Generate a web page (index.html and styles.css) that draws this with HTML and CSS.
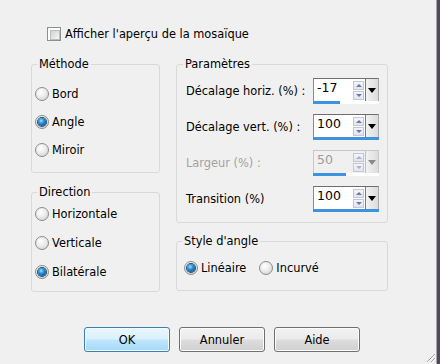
FILE: index.html
```html
<!DOCTYPE html>
<html lang="fr">
<head>
<meta charset="utf-8">
<title>Mosaïque</title>
<link rel="stylesheet" href="styles.css">
</head>
<body>
<div class="window">
  <label class="check-row"><span class="checkbox"></span><span>Afficher l'aperçu de la mosaïque</span></label>

  <div class="columns">
    <div class="col col-left">
      <fieldset class="group g-methode">
        <legend>Méthode</legend>
        <div class="radio-list">
          <label class="radio-row"><span class="radio"></span>Bord</label>
          <label class="radio-row"><span class="radio checked"></span>Angle</label>
          <label class="radio-row"><span class="radio"></span>Miroir</label>
        </div>
      </fieldset>
      <fieldset class="group g-direction">
        <legend>Direction</legend>
        <div class="radio-list">
          <label class="radio-row"><span class="radio"></span>Horizontale</label>
          <label class="radio-row"><span class="radio"></span>Verticale</label>
          <label class="radio-row"><span class="radio checked"></span>Bilatérale</label>
        </div>
      </fieldset>
    </div>

    <div class="col col-right">
      <fieldset class="group g-params">
        <legend>Paramètres</legend>
        <div class="param-list">
          <div class="param-row">
            <span class="param-label">Décalage horiz. (%) :</span>
            <div class="spin">
              <div class="spin-field">
                <span class="spin-val">-17</span>
                <span class="spin-arrows"><span class="arr up"></span><span class="arr down"></span></span>
                <span class="spin-drop"><span class="tri"></span></span>
              </div>
              <div class="spin-bar"><span class="spin-fill" style="width:41.5%"></span></div>
            </div>
          </div>
          <div class="param-row">
            <span class="param-label">Décalage vert. (%) :</span>
            <div class="spin">
              <div class="spin-field">
                <span class="spin-val">100</span>
                <span class="spin-arrows"><span class="arr up"></span><span class="arr down"></span></span>
                <span class="spin-drop"><span class="tri"></span></span>
              </div>
              <div class="spin-bar"><span class="spin-fill" style="width:100%"></span></div>
            </div>
          </div>
          <div class="param-row disabled">
            <span class="param-label">Largeur (%) :</span>
            <div class="spin">
              <div class="spin-field">
                <span class="spin-val">50</span>
                <span class="spin-arrows"><span class="arr up"></span><span class="arr down"></span></span>
                <span class="spin-drop"><span class="tri"></span></span>
              </div>
              <div class="spin-bar"><span class="spin-fill" style="width:50%"></span></div>
            </div>
          </div>
          <div class="param-row">
            <span class="param-label">Transition (%)</span>
            <div class="spin">
              <div class="spin-field">
                <span class="spin-val">100</span>
                <span class="spin-arrows"><span class="arr up"></span><span class="arr down"></span></span>
                <span class="spin-drop"><span class="tri"></span></span>
              </div>
              <div class="spin-bar"><span class="spin-fill" style="width:100%"></span></div>
            </div>
          </div>
        </div>
      </fieldset>
      <fieldset class="group g-style">
        <legend>Style d'angle</legend>
        <div class="style-row">
          <label class="radio-row"><span class="radio checked"></span>Linéaire</label>
          <label class="radio-row"><span class="radio"></span>Incurvé</label>
        </div>
      </fieldset>
    </div>
  </div>

  <div class="buttons">
    <button class="btn btn-default">OK</button>
    <button class="btn">Annuler</button>
    <button class="btn">Aide</button>
  </div>

  <svg class="grip" width="12" height="12" viewBox="0 0 12 12">
    <path d="M11 3 L3 11 M11 7 L7 11" stroke="#a0a0a0" stroke-width="1"/>
    <path d="M11 4 L4 11 M11 8 L8 11" stroke="#ffffff" stroke-width="1"/>
  </svg>
</div>
</body>
</html>
```

FILE: styles.css
```css
* { box-sizing: border-box; }

html, body {
  margin: 0;
  padding: 0;
  background: #f0f0f0;
}

body {
  font-family: "DejaVu Sans", "Liberation Sans", sans-serif;
  font-size: 11.4px;
  color: #000;
}

.window {
  position: relative;
  width: 440px;
  height: 364px;
  background: #f0f0f0;
  border-right: 3px solid #4f4b58;
  box-shadow: inset -1px 0 0 #a9a3b2;
  padding-top: 27px;
}

.check-row {
  display: flex;
  align-items: center;
  gap: 4px;
  height: 14px;
  margin-left: 47px;
}

.checkbox {
  width: 14px;
  height: 14px;
  border: 1px solid #8e8f8f;
  background: #fff;
  padding: 2px;
  display: block;
}
.checkbox::after {
  content: "";
  display: block;
  width: 100%;
  height: 100%;
  background: linear-gradient(135deg, #cfd2d6 0%, #e6e7e9 60%, #f6f6f6 100%);
  border: 1px solid #b9bcc0;
}

.columns {
  display: flex;
  gap: 16px;
  margin-top: 16px;
  margin-left: 31px;
}

.col {
  display: flex;
  flex-direction: column;
}
.col-left { width: 129px; gap: 12px; }
.col-right { width: 212px; gap: 11px; }

.group {
  margin: 0;
  padding: 0;
  border: 1px solid #d9d9d9;
  border-radius: 3px;
  min-width: 0;
}

.group legend {
  padding: 0 2px;
  margin-left: 5px;
  line-height: 14px;
  height: 14px;
}

.radio-row {
  display: flex;
  align-items: center;
  gap: 3px;
  height: 14px;
  white-space: nowrap;
}

.radio {
  width: 14px;
  height: 14px;
  border-radius: 50%;
  border: 1px solid #8b8b8b;
  background: radial-gradient(circle at 40% 35%, #ffffff 0%, #ececec 45%, #c9c9c9 100%);
  display: flex;
  align-items: center;
  justify-content: center;
  flex: none;
}
.radio.checked::after {
  content: "";
  width: 8px;
  height: 8px;
  border-radius: 50%;
  background: radial-gradient(circle at 40% 35%, #9fe3ff 0%, #2f93d8 35%, #135a95 75%, #0a3760 100%);
  box-shadow: 0 0 0 1px #1e4d78;
}

.radio-list {
  display: flex;
  flex-direction: column;
  padding-left: 3px;
}

.g-methode { height: 116px; }
.g-methode .radio-list { margin-top: 16px; gap: 14px; }

.g-direction { height: 107px; }
.g-direction .radio-list { margin-top: 8px; gap: 15px; }

.g-params { height: 166px; }
.g-params legend { margin-left: 6px; }

.param-list {
  display: flex;
  flex-direction: column;
  gap: 10px;
  padding: 7px 8px 0 9px;
}

.param-row {
  display: flex;
  align-items: center;
  justify-content: space-between;
  height: 26px;
}

.param-label { white-space: nowrap; }

.spin {
  width: 66px;
  height: 26px;
  display: flex;
  flex-direction: column;
}

.spin-field {
  display: flex;
  height: 23px;
  background: #fff;
  border: 1px solid #a6a6a6;
  border-top-color: #6f6f6f;
  border-left-color: #8a8a8a;
  border-bottom: none;
}

.spin-val {
  flex: 1;
  padding: 1px 0 0 3px;
  font-size: 12.5px;
  line-height: 15px;
}

.spin-arrows {
  width: 11px;
  display: flex;
  flex-direction: column;
  justify-content: center;
  gap: 1px;
  margin-right: 1px;
}

.arr {
  height: 9px;
  border: 1px solid #c3c8d4;
  background: linear-gradient(#f4f6fa, #dfe4ee);
  position: relative;
}
.arr::after {
  content: "";
  position: absolute;
  left: 2px;
  top: 2px;
  border-left: 3px solid transparent;
  border-right: 3px solid transparent;
}
.arr.up::after { border-bottom: 3px solid #6c7aa4; }
.arr.down::after { border-top: 3px solid #6c7aa4; }

.spin-drop {
  width: 13px;
  background: linear-gradient(90deg, #f2f2f2, #dcdcdc);
  border-left: 1px solid #7a7a7a;
  display: flex;
  align-items: center;
  justify-content: center;
}
.tri {
  width: 0;
  height: 0;
  border-left: 4px solid transparent;
  border-right: 4px solid transparent;
  border-top: 5px solid #000;
}

.spin-bar {
  height: 3px;
  background: #fff;
  display: flex;
}
.spin-fill {
  display: block;
  height: 3px;
  background: #3c93e0;
}

.disabled .param-label { color: #a3a3a3; }
.disabled .spin-val { color: #9c9c9c; }
.disabled .spin-field { background: #f0f0f0; border-color: #c8c8c8; }
.disabled .arr::after { opacity: 0.5; }
.disabled .spin-drop { border-left-color: #c0c0c0; }
.disabled .tri { border-top-color: #8a8a8a; }

.g-style { height: 57px; }
.style-row {
  display: flex;
  gap: 13px;
  padding: 13px 0 0 7px;
}

.buttons {
  display: flex;
  gap: 9px;
  margin-top: 35px;
  margin-left: 84px;
}

.btn {
  width: 86px;
  height: 25px;
  border: 1px solid #707070;
  border-radius: 3px;
  background: linear-gradient(#f2f2f2 0%, #ebebeb 48%, #dddddd 52%, #cfcfcf 100%);
  font-family: inherit;
  font-size: 11.4px;
  color: #000;
  padding: 0;
  box-shadow: inset 0 0 0 1px #fcfcfc;
}

.btn-default {
  border-color: #3c7fb1;
  background: linear-gradient(#eaf6fd 0%, #d9f0fc 48%, #bee6fd 52%, #a7d9f5 100%);
  box-shadow: inset 0 0 0 1px #f4fbff;
}

.grip {
  position: absolute;
  right: 1px;
  bottom: 1px;
}
```
